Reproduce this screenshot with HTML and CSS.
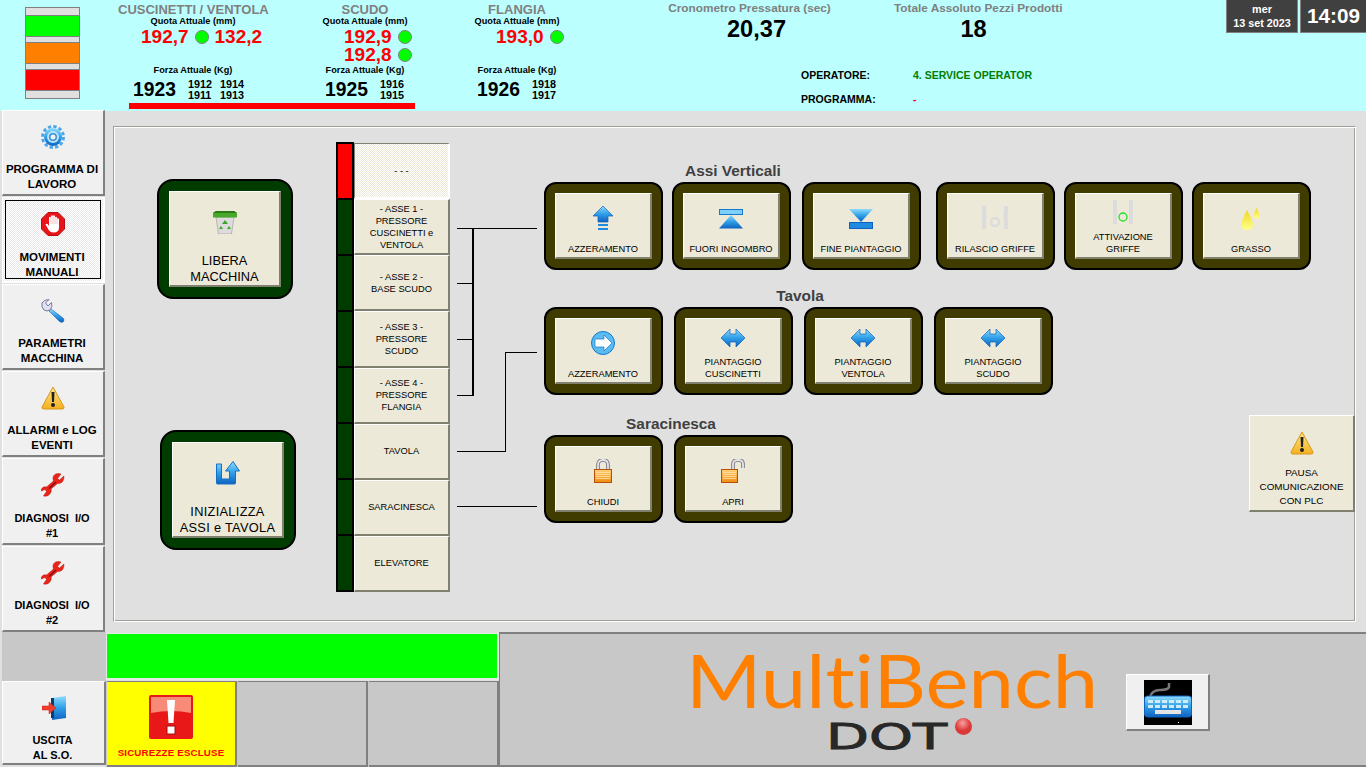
FILE: index.html
```html
<!DOCTYPE html>
<html lang="en">

<head>
    <meta charset="UTF-8">
    <title>MultiBench DOT</title>
    <link rel="stylesheet" href="styles.css">
</head>

<body>
    <!-- shared icons -->
    <svg class="icon-defs" width="0" height="0">
        <defs>
            <linearGradient id="g-blue" x1="0" y1="0" x2="0" y2="1">
                <stop offset="0" stop-color="#8fdcfb" />
                <stop offset="0.5" stop-color="#2f9fe8" />
                <stop offset="1" stop-color="#0f62c0" />
            </linearGradient>
            <linearGradient id="g-yellow" x1="0" y1="0" x2="0" y2="1">
                <stop offset="0" stop-color="#ffe88a" />
                <stop offset="1" stop-color="#f4b021" />
            </linearGradient>
            <linearGradient id="g-orange" x1="0" y1="0" x2="0" y2="1">
                <stop offset="0" stop-color="#ffd27a" />
                <stop offset="1" stop-color="#f08a10" />
            </linearGradient>
            <linearGradient id="g-drop" x1="0" y1="0" x2="0" y2="1">
                <stop offset="0" stop-color="#f0d820" />
                <stop offset="1" stop-color="#ffff90" />
            </linearGradient>
            <symbol id="i-warning" viewBox="0 0 24 24">
                <path d="M12 1 L23 21 Q23.500 23 21 23 L3 23 Q.5 23 1 21 Z" fill="url(#g-yellow)" stroke="#d8971a" />
                <path d="M10.500 6 h3 l-.5 10 h-2 Z" fill="#222" />
                <circle cx="12" cy="19" r="2" fill="#222" />
            </symbol>
            <symbol id="i-wrench-red" viewBox="0 0 24 24">
                <path d="M23 3 L18.500 7 L16.500 5.500 L20 1 Q15 -.5 12.500 3 Q11.500 5.500 12.500 8 L5.500 14 Q1 13 0 18 L4 16.500 L5.500 18.500 L2.500 23 Q8 24 10 19 Q10.500 17.500 10 16 L16.500 10.500 Q23 11 23 3 Z" fill="#ec2418" stroke="#b01010" stroke-width=".5" />
                <path d="M8 15.500 L15 9" stroke="#8c0c0c" stroke-width="1.500" />
            </symbol>
            <symbol id="i-double" viewBox="0 0 24 18">
                <path d="M0 9 L9 0 V5 H15 V0 L24 9 L15 18 V13 H9 V18 Z" fill="url(#g-blue)" stroke="#0f62c0" stroke-width=".7" />
            </symbol>
            <symbol id="i-lock" viewBox="0 0 24 24">
                <path d="M7 12 V6 Q7 1 12 1 Q17 1 17 6 V12" fill="none" stroke="#77777d" stroke-width="3.600" />
                <path d="M7 12 V6 Q7 1 12 1 Q17 1 17 6 V12" fill="none" stroke="#e4e4ea" stroke-width="1.800" />
                <rect x="3.500" y="10.500" width="17" height="13" fill="url(#g-orange)" stroke="#b8500a" />
                <path d="M5 13.500 H19 M5 15.500 H19 M5 17.500 H19 M5 19.500 H19" stroke="#ffe2a8" stroke-width=".8" />
            </symbol>
        </defs>
    </svg>

    <header class="header">
        <div class="lights">
            <span class="light-gap light-gap-top"></span>
            <span class="light light-green"></span>
            <span class="light-gap"></span>
            <span class="light light-orange"></span>
            <span class="light-gap"></span>
            <span class="light light-red"></span>
            <span class="light-gap light-gap-end"></span>
        </div>

        <section class="measure measure-wide">
            <h2 class="measure-title">CUSCINETTI / VENTOLA</h2>
            <p class="measure-label">Quota Attuale (mm)</p>
            <div class="values">
                <div class="value-row">
                    <span class="quota">192,7</span><span class="led"></span><span class="quota">132,2</span>
                </div>
            </div>
            <p class="measure-label">Forza Attuale (Kg)</p>
            <div class="force">
                <span class="force-main">1923</span>
                <span class="force-small">1912<br>1911</span>
                <span class="force-small">1914<br>1913</span>
            </div>
        </section>

        <section class="measure">
            <h2 class="measure-title">SCUDO</h2>
            <p class="measure-label">Quota Attuale (mm)</p>
            <div class="values">
                <div class="value-row"><span class="quota">192,9</span><span class="led"></span></div>
                <div class="value-row"><span class="quota">192,8</span><span class="led"></span></div>
            </div>
            <p class="measure-label">Forza Attuale (Kg)</p>
            <div class="force">
                <span class="force-main">1925</span>
                <span class="force-small">1916<br>1915</span>
            </div>
        </section>

        <section class="measure">
            <h2 class="measure-title">FLANGIA</h2>
            <p class="measure-label">Quota Attuale (mm)</p>
            <div class="values">
                <div class="value-row"><span class="quota">193,0</span><span class="led"></span></div>
            </div>
            <p class="measure-label">Forza Attuale (Kg)</p>
            <div class="force">
                <span class="force-main">1926</span>
                <span class="force-small">1918<br>1917</span>
            </div>
        </section>

        <section class="info">
            <div class="stats">
                <div class="stat stat-time">
                    <p class="stat-label">Cronometro Pressatura (sec)</p>
                    <p class="stat-value">20,37</p>
                </div>
                <div class="stat stat-total">
                    <p class="stat-label">Totale Assoluto Pezzi Prodotti</p>
                    <p class="stat-value">18</p>
                </div>
            </div>
            <div class="op-row">
                <span class="op-label">OPERATORE:</span>
                <span class="op-user">4. SERVICE OPERATOR</span>
            </div>
            <div class="op-row">
                <span class="op-label">PROGRAMMA:</span>
                <span class="op-prog">-</span>
            </div>
        </section>

        <div class="clock">
            <div class="clock-date">mer<br>13 set 2023</div>
            <div class="clock-time">14:09</div>
        </div>

        <div class="red-bar"></div>
    </header>

    <div class="middle">
        <nav class="sidebar">
            <button class="side-btn">
                <svg class="side-icon" width="24" height="24" viewBox="0 0 24 24">
                    <circle cx="12" cy="12" r="10.500" fill="none" stroke="#4aa8ea" stroke-width="3" stroke-dasharray="3.300 2.200" />
                    <circle cx="12" cy="12" r="9" fill="url(#g-blue)" />
                    <circle cx="12" cy="12" r="6" fill="#b5e4fb" />
                    <circle cx="12" cy="12" r="4" fill="#3a90d8" />
                    <circle cx="12" cy="12" r="2.500" fill="#f0f0f0" />
                </svg>
                <span class="side-label">PROGRAMMA DI<br>LAVORO</span>
            </button>
            <button class="side-btn side-btn-active">
                <svg class="side-icon" width="24" height="24" viewBox="0 0 24 24">
                    <path d="M7 .5 H17 L23.500 7 V17 L17 23.500 H7 L.5 17 V7 Z" fill="#e8141c" stroke="#b80c10" />
                    <path d="M4.500 12.500 Q5.500 11 7 12.500 L8 14 V5.500 Q9 4 10 5.500 V4 Q11 2.500 12 4 Q13 2.500 14 4 V5.500 Q15 4 16 5.500 V7 Q17 5.500 18 7 V15.500 Q18 20.500 12.500 20.500 Q9.500 20.500 8 18.500 Z" fill="#fff" />
                    <path d="M10 5.500 V12 M12 4 V12 M14 5 V12 M16 6 V12" stroke="#e8a0a0" stroke-width=".6" />
                </svg>
                <span class="side-label">MOVIMENTI<br>MANUALI</span>
            </button>
            <button class="side-btn">
                <svg class="side-icon" width="24" height="24" viewBox="0 0 24 24">
                    <path d="M10 10 L22 19 Q24 21 22 23 Q20 24 18 22 L8 12 Z" fill="url(#g-blue)" stroke="#1a60b0" stroke-width=".6" />
                    <path d="M8 .5 L4.500 4 L7 7 L10.500 3.500 Q12 8 9 11 Q6 13 3 11 Q0 8 1 4 Q3 .5 8 .5 Z" fill="#dfe0f0" stroke="#7a78a0" />
                </svg>
                <span class="side-label">PARAMETRI<br>MACCHINA</span>
            </button>
            <button class="side-btn">
                <svg class="side-icon" width="24" height="24"><use href="#i-warning" /></svg>
                <span class="side-label">ALLARMI e LOG<br>EVENTI</span>
            </button>
            <button class="side-btn">
                <svg class="side-icon" width="24" height="24"><use href="#i-wrench-red" /></svg>
                <span class="side-label side-label-wide">DIAGNOSI  I/O<br>#1</span>
            </button>
            <button class="side-btn">
                <svg class="side-icon" width="24" height="24"><use href="#i-wrench-red" /></svg>
                <span class="side-label side-label-wide">DIAGNOSI  I/O<br>#2</span>
            </button>
        </nav>

        <main class="main">
            <div class="panel">
                <div class="left-col">
                    <div class="big-frame big-frame-top">
                        <button class="btn big-btn">
                            <svg class="big-icon" width="24" height="24" viewBox="0 0 24 24">
                                <path d="M3 7 L5.500 24 H18.500 L21 7 Z" fill="#dcdcdc" stroke="#888" stroke-width=".5" />
                                <path d="M12 10 L15 14 H9 Z M8 16 L10 19 H6 Z M16 16 L18 19 H14 Z" fill="#3aa82a" />
                                <path d="M3 1 H21 L24 3 V7.500 H0 V3 Z" fill="#47a82a" />
                                <path d="M3 1 H21 L24 3 H0 Z" fill="#2b7a1a" />
                            </svg>
                            <span class="big-label">LIBERA<br>MACCHINA</span>
                        </button>
                    </div>
                    <div class="big-frame big-frame-bottom">
                        <button class="btn big-btn">
                            <svg class="big-icon" width="24" height="24" viewBox="0 0 24 24">
                                <path d="M.5 3 H5.500 V18 H13.500 V10 H9.500 L17 .5 L23.500 10 H19.500 V22 Q19.500 23 18.500 23 H1.500 Q.5 23 .5 22 Z" fill="url(#g-blue)" stroke="#1270c8" />
                            </svg>
                            <span class="big-label big-label-wide">INIZIALIZZA<br>ASSI e TAVOLA</span>
                        </button>
                    </div>
                </div>

                <div class="ladder">
                    <div class="ladder-leds">
                        <span class="ladder-led ladder-led-on"></span>
                        <span class="ladder-led"></span>
                        <span class="ladder-led"></span>
                        <span class="ladder-led"></span>
                        <span class="ladder-led"></span>
                        <span class="ladder-led"></span>
                        <span class="ladder-led"></span>
                        <span class="ladder-led"></span>
                    </div>
                    <div class="ladder-btns">
                        <button class="btn ladder-btn ladder-btn-active">- - -</button>
                        <button class="btn ladder-btn">- ASSE 1 -<br>PRESSORE<br>CUSCINETTI e<br>VENTOLA</button>
                        <button class="btn ladder-btn">- ASSE 2 -<br>BASE SCUDO</button>
                        <button class="btn ladder-btn">- ASSE 3 -<br>PRESSORE<br>SCUDO</button>
                        <button class="btn ladder-btn">- ASSE 4 -<br>PRESSORE<br>FLANGIA</button>
                        <button class="btn ladder-btn">TAVOLA</button>
                        <button class="btn ladder-btn">SARACINESCA</button>
                        <button class="btn ladder-btn">ELEVATORE</button>
                    </div>
                </div>

                <svg class="wires" width="94" height="400" viewBox="0 0 94 400">
                    <path d="M7 86.500 H87 M7 141.500 H23 M7 197.500 H23 M7 253.500 H23" stroke="#000" />
                    <path d="M23 86 V254" stroke="#000" stroke-width="2" />
                    <path d="M7 309.500 H55.500 V210.500 H87 M7 364.500 H87" stroke="#000" fill="none" />
                </svg>

                <div class="groups">
                    <h3 class="group-title group-title-assi">Assi Verticali</h3>
                    <div class="tiles tiles-assi">
                        <div class="tile">
                            <button class="btn tile-btn">
                                <svg class="tile-icon" width="24" height="24" viewBox="0 0 24 24">
                                    <path d="M12 0 L22 10 H17 V16 H7 V10 H2 Z" fill="url(#g-blue)" stroke="#0f62c0" stroke-width=".7" />
                                    <path d="M7 18 H17 V20 H7 Z M7 22 H17 V24 H7 Z" fill="#1f8ae0" />
                                </svg>
                                <span>AZZERAMENTO</span>
                            </button>
                        </div>
                        <div class="tile">
                            <button class="btn tile-btn">
                                <svg class="tile-icon tile-icon-flat" width="24" height="20" viewBox="0 0 24 20">
                                    <rect x=".5" y=".5" width="23" height="5" fill="#7fd0f8" stroke="#1478d0" />
                                    <path d="M12 6 L24 19.500 H0 Z" fill="url(#g-blue)" />
                                </svg>
                                <span>FUORI INGOMBRO</span>
                            </button>
                        </div>
                        <div class="tile">
                            <button class="btn tile-btn">
                                <svg class="tile-icon tile-icon-flat" width="24" height="20" viewBox="0 0 24 20">
                                    <path d="M0 0 H24 L12 13 Z" fill="url(#g-blue)" />
                                    <rect x=".5" y="13.500" width="23" height="6" fill="#1f8ae0" stroke="#0f62c0" />
                                </svg>
                                <span>FINE PIANTAGGIO</span>
                            </button>
                        </div>
                        <div class="tile">
                            <button class="btn tile-btn">
                                <svg class="tile-icon" width="28" height="24" viewBox="0 0 28 24">
                                    <path d="M1 0 H5 V7 L6 10 L5 14 V23 H1 Z M23 0 H27 V23 H23 V14 L22 10 L23 7 Z" fill="#dcdcdc" />
                                    <circle cx="14" cy="16" r="4" fill="none" stroke="#dcdcdc" stroke-width="2.500" />
                                </svg>
                                <span>RILASCIO GRIFFE</span>
                            </button>
                        </div>
                        <div class="tile">
                            <button class="btn tile-btn">
                                <svg class="tile-icon tile-icon-high" width="20" height="24" viewBox="0 0 20 24">
                                    <path d="M0 0 H4 V24 H0 Z M16 0 H20 V24 H16 Z" fill="#dcdcdc" />
                                    <circle cx="10" cy="17" r="4" fill="none" stroke="#20e020" stroke-width="1.300" />
                                </svg>
                                <span>ATTIVAZIONE<br>GRIFFE</span>
                            </button>
                        </div>
                        <div class="tile">
                            <button class="btn tile-btn">
                                <svg class="tile-icon" width="20" height="24" viewBox="0 0 20 24">
                                    <path d="M6 4 Q12 15 12 19 Q12 24 6 24 Q0 24 0 19 Q0 15 6 4 Z" fill="url(#g-drop)" />
                                    <path d="M15.500 2 Q19 8 19 10 Q19 12.500 15.500 12.500 Q12.500 12.500 12.500 10 Q12.500 8 15.500 2 Z" fill="url(#g-drop)" />
                                </svg>
                                <span>GRASSO</span>
                            </button>
                        </div>
                    </div>

                    <h3 class="group-title group-title-tavola">Tavola</h3>
                    <div class="tiles tiles-tavola">
                        <div class="tile">
                            <button class="btn tile-btn">
                                <svg class="tile-icon" width="24" height="24" viewBox="0 0 24 24">
                                    <circle cx="12" cy="12" r="11.500" fill="#5cbcf0" stroke="#1478d0" />
                                    <path d="M4 8 H13 V4 L21 12 L13 20 V16 H4 Z" fill="#fff" stroke="#1478d0" stroke-width=".7" />
                                </svg>
                                <span>AZZERAMENTO</span>
                            </button>
                        </div>
                        <div class="tile">
                            <button class="btn tile-btn">
                                <svg class="tile-icon tile-icon-double" width="24" height="18"><use href="#i-double" /></svg>
                                <span>PIANTAGGIO<br>CUSCINETTI</span>
                            </button>
                        </div>
                        <div class="tile">
                            <button class="btn tile-btn">
                                <svg class="tile-icon tile-icon-double" width="24" height="18"><use href="#i-double" /></svg>
                                <span>PIANTAGGIO<br>VENTOLA</span>
                            </button>
                        </div>
                        <div class="tile">
                            <button class="btn tile-btn">
                                <svg class="tile-icon tile-icon-double" width="24" height="18"><use href="#i-double" /></svg>
                                <span>PIANTAGGIO<br>SCUDO</span>
                            </button>
                        </div>
                    </div>

                    <div class="last-row">
                        <div>
                            <h3 class="group-title group-title-sarac">Saracinesca</h3>
                            <div class="tiles tiles-sarac">
                                <div class="tile">
                                    <button class="btn tile-btn">
                                        <svg class="tile-icon" width="24" height="24"><use href="#i-lock" /></svg>
                                        <span>CHIUDI</span>
                                    </button>
                                </div>
                                <div class="tile">
                                    <button class="btn tile-btn">
                                        <svg class="tile-icon" width="24" height="24" viewBox="0 0 24 24">
                                            <path d="M12 12 V5 Q12 1 17 1 Q22 1 22 5 V9" fill="none" stroke="#77777d" stroke-width="3.600" />
                                            <path d="M12 12 V5 Q12 1 17 1 Q22 1 22 5 V9" fill="none" stroke="#e4e4ea" stroke-width="1.800" />
                                            <rect x=".5" y="10.500" width="16" height="13" fill="url(#g-orange)" stroke="#b8500a" />
                                            <path d="M2 13.500 H15 M2 15.500 H15 M2 17.500 H15 M2 19.500 H15" stroke="#ffe2a8" stroke-width=".8" />
                                        </svg>
                                        <span>APRI</span>
                                    </button>
                                </div>
                            </div>
                        </div>
                        <button class="btn pause-btn">
                            <svg class="pause-icon" width="24" height="24"><use href="#i-warning" /></svg>
                            <span>PAUSA<br>COMUNICAZIONE<br>CON PLC</span>
                        </button>
                    </div>
                </div>
            </div>
        </main>
    </div>

    <footer class="bottom">
        <div class="bottom-blank"></div>
        <div class="status-green"></div>
        <div class="logo-panel">
            <div class="logo">
                <div class="logo-name">MultiBench</div>
                <div class="logo-dot">
                    <span class="logo-dot-text">DOT</span>
                    <span class="logo-ball"></span>
                </div>
            </div>
            <button class="keyboard-btn">
                <svg width="48" height="45" viewBox="0 0 48 45">
                    <rect width="48" height="45" fill="#000" />
                    <path d="M6 17 Q8 10 16 10 Q24 10 25 7 V3" fill="none" stroke="#777" stroke-width="2.500" />
                    <rect x=".5" y="16" width="47" height="21" rx="3" fill="url(#g-blue)" stroke="#0f62c0" />
                    <path d="M4 20 h5 v3 h-5 Z M11 20 h5 v3 h-5 Z M18 20 h5 v3 h-5 Z M25 20 h5 v3 h-5 Z M32 20 h5 v3 h-5 Z M39 20 h5 v3 h-5 Z M4 25 h5 v3 h-5 Z M11 25 h5 v3 h-5 Z M18 25 h5 v3 h-5 Z M25 25 h5 v3 h-5 Z M32 25 h5 v3 h-5 Z M39 25 h5 v3 h-5 Z" fill="#cfeaf8" />
                    <rect x="11" y="30" width="26" height="4" fill="#e4e4e4" />
                    <rect x="34" y="42" width="1" height="1" fill="#fff" />
                </svg>
            </button>
        </div>
        <button class="side-btn exit-btn">
            <svg class="side-icon" width="24" height="24" viewBox="0 0 24 24">
                <path d="M10 2 L24 0 V22 L10 24 Z" fill="url(#g-blue)" />
                <path d="M9 2 H12 V22 H9 Z" fill="#0c3a70" />
                <path d="M0 10 H7 V6 L14 12 L7 18 V14 H0 Z" fill="#f03c2c" stroke="#c02018" stroke-width=".5" />
            </svg>
            <span class="side-label side-label-wide">USCITA<br>AL S.O.</span>
        </button>
        <div class="cells">
            <div class="cell cell-alert">
                <svg width="44" height="44" viewBox="0 0 44 44">
                    <rect width="44" height="44" rx="2" fill="#e81818" />
                    <path d="M2 2 H42 V18 Q22 14 2 18 Z" fill="#f88a78" />
                    <path d="M18 5 H26 L24.500 28 H19.500 Z" fill="#fff" />
                    <rect x="18" y="31" width="8" height="8" fill="#fff" stroke="#a80c0c" />
                </svg>
                <span class="cell-label">SICUREZZE ESCLUSE</span>
            </div>
            <div class="cell"></div>
            <div class="cell"></div>
        </div>
    </footer>
</body>
</html>
```

FILE: styles.css
```css
/* Global */
* {
    margin: 0;
    padding: 0;
    box-sizing: border-box;
}

body {
    width: 1366px;
    height: 767px;
    overflow: hidden;
    display: flex;
    flex-direction: column;
    background-color: #e0e0e0;
    font-family: "Liberation Sans", Arial, sans-serif;
    color: #000;
}

button {
    font-family: inherit;
    color: inherit;
    cursor: pointer;
}

.icon-defs {
    position: absolute;
}

/* Header */
.header {
    display: grid;
    grid-template-columns: 118px 202px 152px 196px 558px 140px;
    grid-template-rows: 103px 6px 2px;
    height: 111px;
    flex: none;
    background-color: #bbffff;
}

.lights {
    display: flex;
    flex-direction: column;
    width: 55px;
    height: 92px;
    margin: 7px 0 0 25px;
    border: 1px solid #808080;
    background-color: #e0e0e0;
}

.light {
    height: 22px;
    border-top: 1px solid #808080;
    border-bottom: 1px solid #808080;
}

.light-gap {
    height: 5px;
}

.light-gap-top {
    height: 7px;
}

.light-gap-end {
    flex: 1;
}

.light-green {
    background-color: #00ff00;
}

.light-orange {
    background-color: #ff8000;
}

.light-red {
    background-color: #ff0000;
}

.measure {
    width: 90px;
}

.measure-wide {
    width: 150px;
}

.measure-title {
    height: 16px;
    padding-top: 2px;
    font-size: 13px;
    line-height: 15px;
    text-align: center;
    white-space: nowrap;
    color: #808080;
}

.measure-label {
    height: 11px;
    font-size: 9.2px;
    line-height: 11px;
    font-weight: bold;
    text-align: center;
    white-space: nowrap;
}

.values {
    height: 38px;
    padding: 1px 0 0 24px;
}

.measure-wide .values {
    padding-left: 23px;
}

.value-row {
    display: flex;
    align-items: center;
    height: 18px;
}

.quota {
    font-size: 19px;
    line-height: 18px;
    font-weight: bold;
    color: #ff0000;
}

.led {
    flex: none;
    width: 14px;
    height: 14px;
    margin: 0 6px;
    border: 1px solid #808080;
    border-radius: 50%;
    background-color: #00ff00;
}

.force {
    display: flex;
    align-items: center;
    height: 24px;
    margin-top: 2px;
    padding-left: 5px;
    font-weight: bold;
}

.measure-wide .force {
    padding-left: 15px;
}

.force-main {
    font-size: 19.3px;
    margin-right: 12px;
}

.force-small {
    font-size: 10.8px;
    line-height: 11px;
    margin-right: 8px;
}

.info {
    grid-column: 5;
    grid-row: 1 / 4;
}

.stats {
    display: flex;
    gap: 63px;
    height: 63px;
}

.stat {
    text-align: center;
}

.stat-time {
    width: 163px;
}

.stat-time .stat-value {
    padding-left: 14px;
}

.stat-total {
    width: 166px;
}

.stat-total .stat-value {
    padding-right: 7px;
}

.stat-label {
    padding-top: 2px;
    font-size: 11.8px;
    line-height: 12px;
    font-weight: bold;
    white-space: nowrap;
    color: #808080;
}

.stat-value {
    font-size: 23.6px;
    line-height: 30px;
    font-weight: bold;
}

.op-row {
    display: flex;
    align-items: center;
    height: 24px;
    margin-left: 133px;
    font-size: 10.5px;
    font-weight: bold;
}

.op-label {
    flex: none;
    width: 112px;
}

.op-user {
    color: #008000;
}

.op-prog {
    color: #ff0000;
}

.clock {
    grid-column: 6;
    grid-row: 1;
    display: flex;
    gap: 2px;
    height: 33px;
    color: #fff;
    text-align: center;
}

.clock-date {
    width: 72px;
    padding-top: 2px;
    background-color: #404040;
    border: 1px solid #808080;
    border-top: none;
    font-size: 10.8px;
    line-height: 14px;
    font-weight: bold;
}

.clock-time {
    flex: 1;
    background-color: #404040;
    border: 1px solid #808080;
    border-top: none;
    border-right: none;
    font-size: 20.7px;
    line-height: 32px;
    font-weight: bold;
}

.red-bar {
    grid-column: 2 / 4;
    grid-row: 2;
    margin: 0 57px 0 11px;
    background-color: #ff0000;
}

/* Middle */
.middle {
    display: grid;
    grid-template-columns: 105px 1fr;
    height: 521px;
    flex: none;
}

/* Sidebar */
.sidebar {
    display: flex;
    flex-direction: column;
    gap: 1px;
    margin-top: -1px;
    padding-left: 2px;
}

.side-btn {
    display: flex;
    flex-direction: column;
    align-items: center;
    flex: 1;
    padding-bottom: 2px;
    background-color: #f0f0f0;
    border: solid;
    border-width: 1px 2px 2px 1px;
    border-color: #fff #808080 #808080 #fff;
}

.side-icon {
    flex: none;
    margin-top: 14px;
}

.side-label {
    margin-top: auto;
    margin-right: 2px;
    font-size: 11.5px;
    line-height: 15px;
    font-weight: bold;
    white-space: nowrap;
}

.side-label-wide {
    white-space: pre;
    font-size: 11px;
}

.side-btn-active {
    position: relative;
    border-color: #fff;
    padding-bottom: 1px;
    background-color: #fff;
    background-image: conic-gradient(#fff 25%, #e8e8e8 0 50%, #fff 0 75%, #e8e8e8 0);
    background-size: 2px 2px;
}

.side-btn-active::after {
    content: "";
    position: absolute;
    inset: 2px;
    border: 1px solid #000;
}

/* Main panel */
.main {
    padding: 15px 13px 10px 8px;
}

.panel {
    display: flex;
    height: 496px;
    border: 1px solid;
    border-color: #a0a098 #fff #fff #a0a098;
    box-shadow: inset 1px 1px 0 #fff, inset -1px -1px 0 #a0a098;
}

.left-col {
    flex: none;
    width: 222px;
}

/* Button with raised edge */
.btn {
    display: flex;
    flex-direction: column;
    align-items: center;
    background-color: #ece9d8;
    border: solid;
    border-width: 1px 2px 2px 1px;
    border-color: #fff #808070 #808070 #fff;
}

.big-frame {
    display: flex;
    width: 136px;
    height: 120px;
    padding: 10px;
    background-color: #003c00;
    border: 2px solid #000;
    border-radius: 16px;
}

.big-frame-top {
    margin: 52px 0 0 43px;
}

.big-frame-bottom {
    margin: 131px 0 0 46px;
}

.big-btn {
    width: 100%;
}

.big-icon {
    flex: none;
    margin-top: 18px;
}

.big-label {
    margin-top: auto;
    font-size: 12.8px;
    line-height: 16px;
}

.big-label-wide {
    letter-spacing: .3px;
}

/* Ladder */
.ladder {
    display: flex;
    flex: none;
    width: 114px;
    height: 450px;
    margin-top: 15px;
}

.ladder-leds {
    display: flex;
    flex-direction: column;
    gap: 2px;
    flex: none;
    width: 18px;
    background-color: #000;
    border: 2px solid #000;
}

.ladder-led {
    flex: 1;
    background-color: #003c00;
}

.ladder-led-on {
    background-color: #ff0000;
}

.ladder-btns {
    display: flex;
    flex-direction: column;
    flex: 1;
    padding-top: 1px;
}

.ladder-btn {
    justify-content: center;
    flex: 1;
    font-size: 9.3px;
    line-height: 12px;
}

.ladder-btn-active {
    border-color: #808070 #fff #fff #808070;
    background-image: conic-gradient(#fff 25%, #ece9d8 0 50%, #fff 0 75%, #ece9d8 0);
    background-size: 2px 2px;
}

.wires {
    flex: none;
    margin-top: 15px;
    shape-rendering: crispEdges;
}

/* Groups of tiles */
.groups {
    flex: none;
    width: 811px;
    margin-top: 35px;
}

.group-title {
    height: 20px;
    font-size: 15.4px;
    line-height: 18px;
    text-align: center;
    color: #404040;
    white-space: nowrap;
}

.group-title-assi {
    width: 378px;
}

.group-title-tavola {
    width: 512px;
    margin-top: 17px;
}

.group-title-sarac {
    width: 254px;
}

.tiles {
    display: grid;
    height: 88px;
}

.tiles-assi {
    grid-template-columns: 128px 130px 134px 128px 128px 120px;
}

.tiles-tavola {
    grid-template-columns: 130px 130px 130px 120px;
}

.tiles-sarac {
    grid-template-columns: 130px 120px;
}

.tile {
    display: flex;
    width: 119px;
    height: 88px;
    padding: 9px;
    background-color: #403c00;
    border: 2px solid #000;
    border-radius: 12px;
}

.tile-btn {
    width: 100%;
    padding-bottom: 2px;
    font-size: 9.3px;
    line-height: 12px;
    white-space: nowrap;
}

.tile-btn span {
    margin-top: auto;
}

.tile-icon {
    flex: none;
    margin-top: 12px;
}

.tile-icon-flat {
    margin-top: 15px;
}

.tile-icon-high {
    margin-top: 6px;
}

.tile-icon-double {
    margin-top: 10px;
}

.last-row {
    display: flex;
    justify-content: space-between;
    margin-top: 20px;
}

.pause-btn {
    width: 106px;
    height: 97px;
    padding-bottom: 2px;
    font-size: 9.9px;
    line-height: 14px;
}

.pause-btn span {
    margin-top: auto;
}

.pause-icon {
    margin-top: 15px;
}

/* Bottom area */
.bottom {
    display: grid;
    grid-template-columns: 106px 393px 1fr;
    grid-template-rows: 49px 86px;
    flex: none;
}

.bottom-blank {
    margin-left: 2px;
    background-color: #c8c8c8;
}

.status-green {
    margin-top: 1px;
    margin-bottom: 1px;
    background-color: #00ff00;
    border: 2px solid #e8e8e8;
    border-width: 1px 2px 2px 1px;
}

.logo-panel {
    display: flex;
    grid-column: 3;
    grid-row: 1 / 3;
    padding: 13px 0 0 186px;
    background-color: #c8c8c8;
    border-top: 2px solid #808080;
    border-left: 1px solid #808080;
    border-bottom: 2px solid #808080;
}

.logo {
    width: 410px;
}

.logo-name {
    font-family: Lato, sans-serif;
    font-size: 74px;
    line-height: 66px;
    font-variant-ligatures: none;
    color: #ff8000;
    white-space: nowrap;
    transform: scaleX(1.1);
    transform-origin: left top;
}

.logo-dot {
    display: flex;
    align-items: flex-start;
    margin: 8px 0 0 143px;
}

.logo-dot-text {
    display: inline-block;
    width: 80px;
    margin: 2px 49px 0 -3px;
    transform: scaleX(1.55);
    transform-origin: left top;
    font-family: "DejaVu Sans", sans-serif;
    font-size: 36px;
    line-height: 27px;
    -webkit-text-stroke: .9px #282828;
    color: #282828;
}

.logo-ball {
    width: 17px;
    height: 17px;
    margin-top: -3px;
    border-radius: 50%;
    background: radial-gradient(circle at 45% 30%, #f8a0a0, #dc3838 50%);
}

.keyboard-btn {
    display: flex;
    justify-content: center;
    align-items: center;
    width: 84px;
    height: 57px;
    margin: 27px 0 0 30px;
    background-color: #f0f0f0;
    border: solid;
    border-width: 1px 2px 2px 1px;
    border-color: #fff #808080 #808080 #fff;
}

.exit-btn {
    grid-column: 1;
    grid-row: 2;
    margin-left: 2px;
    margin-bottom: 2px;
    padding-bottom: 0;
}

.cells {
    display: grid;
    grid-template-columns: 131px 131px 131px;
    height: 86px;
    background-color: #c8c8c8;
}

.cell {
    display: flex;
    flex-direction: column;
    align-items: center;
    padding-top: 13px;
    margin-left: 1px;
    border-right: 2px solid #808080;
    border-bottom: 2px solid #808080;
    border-top: 1px solid #808080;
}

.cell-alert {
    background-color: #ffff00;
}

.cell-label {
    margin-top: 8px;
    font-size: 9.7px;
    line-height: 12px;
    font-weight: bold;
    letter-spacing: .2px;
    color: #ff0000;
    white-space: nowrap;
}
```
